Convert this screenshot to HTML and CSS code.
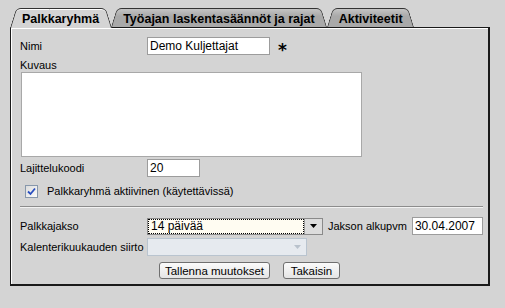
FILE: index.html
```html
<!DOCTYPE html>
<html lang="fi">
<head>
<meta charset="UTF-8">
<title>Palkkaryhmä</title>
<link rel="stylesheet" href="styles.css">
</head>
<body>

<div class="wrap">
    <div class="tabs">
        <div class="tab active">Palkkaryhmä</div>
        <div class="tab">Työajan laskentasäännöt ja rajat</div>
        <div class="tab">Aktiviteetit</div>
    </div>

    <div class="panel">
        <div class="row">
            <label class="label">Nimi</label>
            <input class="field name" type="text" value="Demo Kuljettajat">
            <span class="required">*</span>
        </div>
        <div class="label kuvaus">Kuvaus</div>
        <textarea class="field desc"></textarea>

        <div class="row sort">
            <label class="label">Lajittelukoodi</label>
            <input class="field code" type="text" value="20">
        </div>

        <div class="check-row">
            <span class="checkbox">
                <svg width="9" height="9" viewBox="0 0 9 9"><path d="M1 4.5 L3.5 7 L8 1.5" fill="none" stroke="#2a4fc0" stroke-width="1.8"/></svg>
            </span>
            <span>Palkkaryhmä aktiivinen (käytettävissä)</span>
        </div>

        <div class="separator"></div>

        <div class="row period">
            <label class="label">Palkkajakso</label>
            <div class="select focused">
                <span class="select-text">14 päivää</span>
                <span class="arrow"><svg width="7" height="4" viewBox="0 0 7 4"><path d="M0 0 H7 L3.5 4 Z" fill="#000"/></svg></span>
            </div>
            <span class="label inline">Jakson alkupvm</span>
            <input class="field date" type="text" value="30.04.2007">
        </div>

        <div class="row shift">
            <label class="label">Kalenterikuukauden siirto</label>
            <div class="select disabled">
                <span class="select-text"></span>
                <span class="arrow"><svg width="7" height="4" viewBox="0 0 7 4"><path d="M0 0 H7 L3.5 4 Z" fill="#b9c2cc"/></svg></span>
            </div>
        </div>

        <div class="buttons">
            <button class="btn save">Tallenna muutokset</button>
            <button class="btn back">Takaisin</button>
        </div>
    </div>
</div>

</body>
</html>
```

FILE: styles.css
```css
/* Page */
body {
    margin: 0;
    background: #d4d4d4;
    font-family: "Liberation Sans", Arial, sans-serif;
    font-size: 11px;
    color: #000;
}
.wrap {
    width: 480px;
    padding: 8px 0 0 10px;
}

/* Tabs */
.tabs {
    display: flex;
    height: 19px;
}
.tab {
    position: relative;
    z-index: 1;
    height: 19px;
    padding: 2px 12px 0;
    box-sizing: border-box;
    display: flex;
    align-items: center;
    font-weight: bold;
    font-size: 12.5px;
    white-space: nowrap;
}
.tab::before,
.tab::after {
    content: "";
    position: absolute;
    z-index: -1;
    top: 0;
    bottom: 0;
    width: 55%;
    background: linear-gradient(#c4c4c4, #a9a9a9 40%);
    border-top: 1px solid #333;
}
.tab::before {
    left: 0;
    border-left: 1px solid #333;
    border-radius: 5px 0 0 0;
    transform-origin: bottom left;
    transform: skewX(-17deg);
}
.tab::after {
    right: 0;
    border-right: 1px solid #333;
    border-radius: 0 5px 0 0;
    transform-origin: bottom right;
    transform: skewX(17deg);
}
.tab.active {
    z-index: 2;
    height: 20px;
    margin-bottom: -1px;
    padding-bottom: 1px;
}
.tab.active::before,
.tab.active::after {
    background: #d4d4d4;
    box-shadow: inset 0 1px #fff;
}

/* Panel */
.panel {
    height: 259px;
    box-sizing: border-box;
    border: 1px solid #1a1a1a;
    border-right-width: 2px;
    border-bottom-width: 2px;
    box-shadow: inset 1px 1px #fff;
    padding: 9px 5px 0 9px;
}

/* Form rows */
.row {
    display: flex;
    align-items: center;
}
.label {
    width: 127px;
    flex: none;
}
.label.inline {
    width: auto;
    margin: 0 5px;
}
.field {
    box-sizing: border-box;
    border: 1px solid #9c9c9c;
    background: #fff;
    font-family: inherit;
    font-size: 12px;
    padding: 0 2px;
    margin: 0;
}
.name {
    width: 123px;
    height: 18px;
}
.required {
    margin-left: 8px;
    font-family: "DejaVu Sans", sans-serif;
    font-size: 17px;
    font-weight: bold;
    line-height: 10px;
    padding-top: 8px;
}
.kuvaus {
    margin-top: 3px;
    line-height: 14px;
}
.desc {
    display: block;
    width: 341px;
    height: 85px;
    margin-left: 1px;
    border-color: #a8a8a8;
    resize: none;
}
.sort {
    margin-top: 2px;
}
.code {
    width: 53px;
    height: 18px;
}

/* Checkbox */
.check-row {
    display: flex;
    align-items: center;
    height: 16px;
    margin-top: 6px;
    padding-left: 5px;
}
.checkbox {
    width: 13px;
    height: 13px;
    box-sizing: border-box;
    border: 1px solid #8797ab;
    background: linear-gradient(135deg, #dcdcdc, #fbfbfb);
    display: flex;
    align-items: center;
    justify-content: center;
    margin-right: 9px;
}

.separator {
    margin-top: 7px;
    border-top: 1px solid #8c8c8c;
    border-bottom: 1px solid #f2f2f2;
}

/* Selects */
.period {
    margin-top: 9px;
}
.select {
    box-sizing: border-box;
    display: flex;
    align-items: stretch;
    border: 1px solid #8a8a8a;
}
.select-text {
    flex: 1;
    padding: 0 2px;
    font-size: 12px;
    line-height: 14px;
}
.focused {
    width: 176px;
    height: 17px;
    background: #fffcf2;
}
.focused .select-text {
    border: 1px dotted #000;
    line-height: 13px;
}
.arrow {
    width: 17px;
    display: flex;
    align-items: center;
    justify-content: center;
    background: #dcdcdc;
    border-left: 1px solid #9a9a9a;
}
.date {
    width: 71px;
    height: 18px;
}
.shift {
    margin-top: 3px;
}
.disabled {
    width: 160px;
    height: 18px;
    background: #e6eaef;
    border-color: #b9c4cf;
}
.disabled .arrow {
    background: #e6eaef;
    border-left: none;
}

/* Buttons */
.buttons {
    display: flex;
    justify-content: center;
    gap: 13px;
    margin-top: 6px;
    padding-right: 4px;
}
.btn {
    height: 17px;
    padding: 0;
    border: 1px solid #6f6f6f;
    border-radius: 3px;
    background: linear-gradient(#fbfbfb, #e4e4e4);
    font-family: inherit;
    font-size: 11.5px;
    line-height: 14px;
    white-space: nowrap;
}
.save {
    width: 111px;
}
.back {
    width: 57px;
}
```
